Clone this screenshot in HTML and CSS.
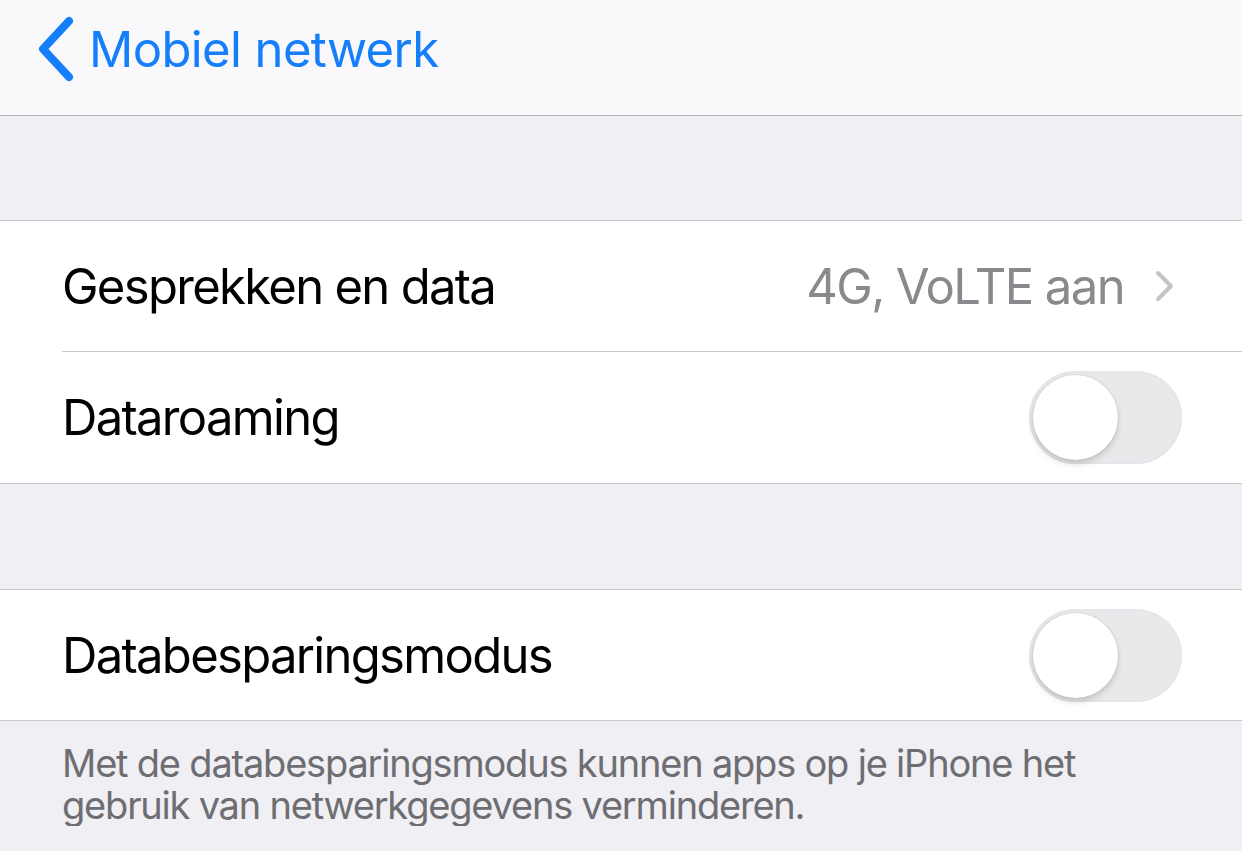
FILE: index.html
```html
<!DOCTYPE html>
<html lang="nl">
<head>
<meta charset="utf-8">
<link rel="stylesheet" href="styles.css">
</head>
<body>
<header class="nav">
  <a class="back">
    <svg class="back-icon" width="40" height="66" viewBox="0 0 40 66"><path d="M33 5 L7 33 L33 61" fill="none" stroke="#157efb" stroke-width="8" stroke-linecap="round" stroke-linejoin="round"/></svg>
    <span class="back-label">Mobiel netwerk</span>
  </a>
</header>
<div class="spacer"></div>
<section class="group">
  <div class="row">
    <span class="label">Gesprekken en data</span>
    <span class="value">4G, VoLTE aan</span>
    <svg class="chev" width="22" height="34" viewBox="0 0 22 34"><path d="M4 4 L17 17 L4 30" fill="none" stroke="#c4c4c7" stroke-width="4" stroke-linecap="round" stroke-linejoin="round"/></svg>
  </div>
  <div class="row">
    <span class="label">Dataroaming</span>
    <span class="switch"><span class="knob"></span></span>
  </div>
</section>
<div class="spacer spacer-2"></div>
<section class="group">
  <div class="row row-short">
    <span class="label">Databesparingsmodus</span>
    <span class="switch"><span class="knob"></span></span>
  </div>
</section>
<p class="footer">Met de databesparingsmodus kunnen apps op je iPhone het gebruik van netwerkgegevens verminderen.</p>
</body>
</html>
```

FILE: styles.css
```css
html, body {
  margin: 0;
  padding: 0;
  background: #efeff4;
  font-family: Inter, "Noto Sans", sans-serif;
  -webkit-font-smoothing: antialiased;
}
.nav {
  height: 116px;
  background: #f9f9fc;
  border-bottom: 1px solid #b3b3b6;
  box-sizing: border-box;
  display: flex;
  align-items: flex-start;
}
.back {
  display: flex;
  align-items: center;
  margin-top: 16px;
  margin-left: 36px;
  color: #157efb;
  height: 66px;
}
.back-icon { display: block; }
.back-label {
  font-size: 49px;
  margin-left: 13px;
  letter-spacing: -0.6px;
}
.spacer {
  height: 104px;
}
.spacer-2 {
  height: 105px;
}
.group {
  background: #fff;
  border-top: 1px solid #c8c7cc;
  border-bottom: 1px solid #c8c7cc;
  padding-left: 62px;
}
.row {
  height: 131px;
  display: flex;
  align-items: center;
  padding-right: 60px;
  box-sizing: border-box;
  border-bottom: 1px solid #c8c7cc;
}
.row:last-child {
  border-bottom: none;
}
.row-short {
  height: 130px;
}
.label {
  flex: 1;
  font-size: 49px;
  color: #000;
  letter-spacing: -1.7px;
}
.value {
  font-size: 49px;
  color: #8a8a8e;
  letter-spacing: -1.6px;
  margin-right: 30px;
}
.chev { margin-right: 6px; display: block; }
.switch {
  width: 153px;
  height: 93px;
  border-radius: 47px;
  background: #e9e9eb;
  box-sizing: border-box;
  border: 2px solid #e5e5ea;
  position: relative;
  display: block;
}
.knob {
  position: absolute;
  left: 2px;
  top: 2px;
  width: 85px;
  height: 85px;
  border-radius: 50%;
  background: #fff;
  box-shadow: 0 4px 6px rgba(0,0,0,0.15), 0 0 0 1px rgba(0,0,0,0.05);
}
.footer {
  margin: 0;
  padding: 21px 62px 0 62px;
  font-size: 38px;
  line-height: 42px;
  color: #6d6d72;
  letter-spacing: -1.2px;
}
```
